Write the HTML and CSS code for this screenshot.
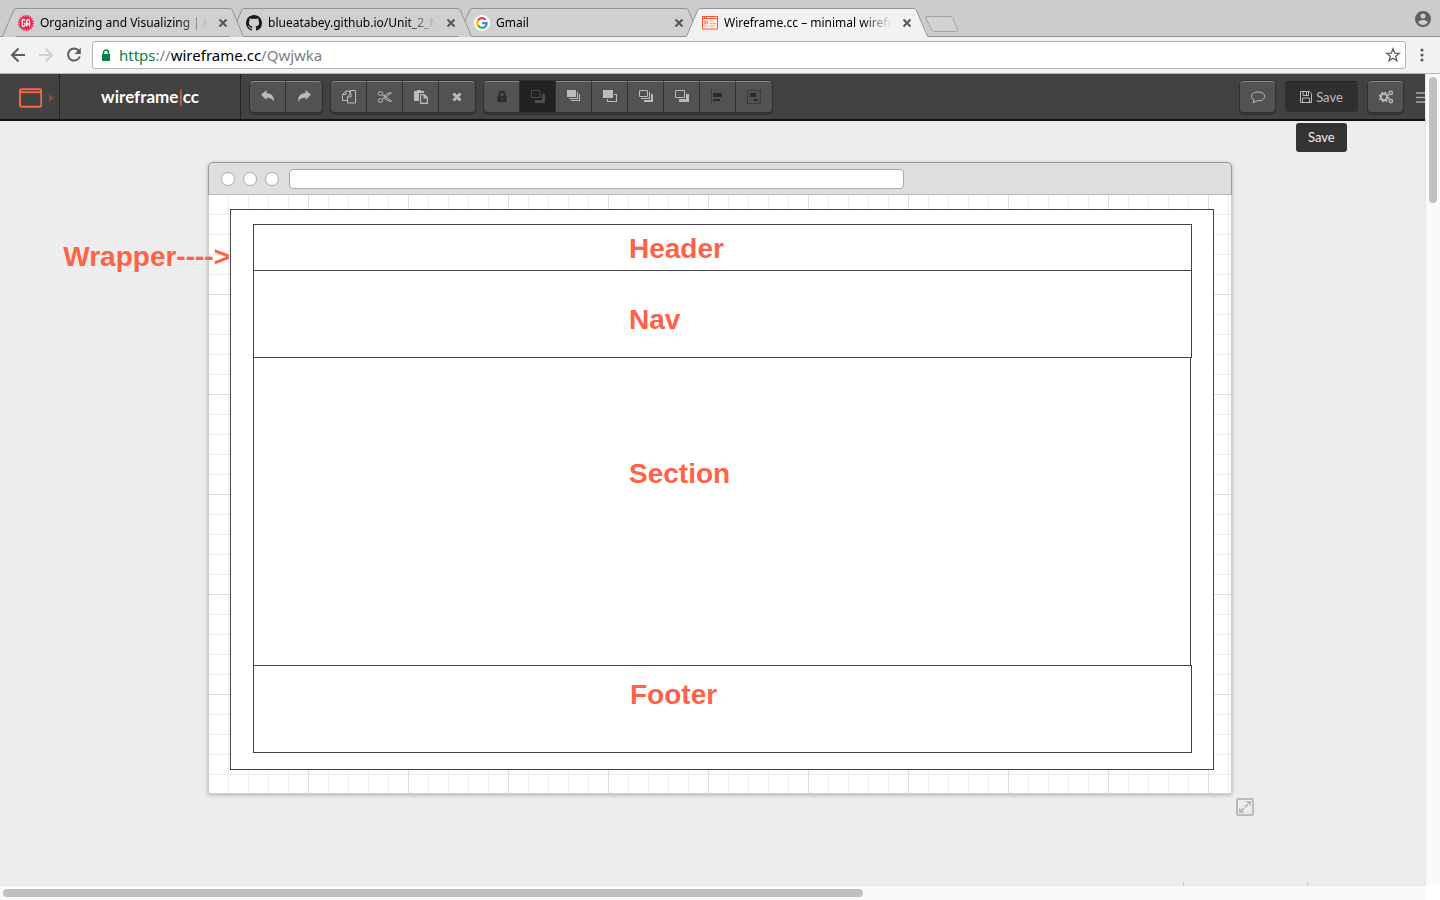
FILE: index.html
```html
<!DOCTYPE html>
<html lang="en">
<head>
<meta charset="utf-8">
<title>Wireframe.cc – minimal wireframing tool</title>
<link rel="stylesheet" href="styles.css">
</head>
<body>
<div class="browser">
  <div class="tabstrip">
    <div class="tabs">
      <div class="tab tab-a">
        <svg class="slant" viewBox="0 0 14 29"><path class="tab-fill" d="M0 29 12.500.5H14V29z"/><path class="tab-line" d="M.5 28.500 12 1.500Q12.500.5 14 .5"/></svg>
        <div class="tab-body">
          <svg class="favicon" viewBox="0 0 16 16"><circle cx="8" cy="8" r="6.800" fill="#f0204a"/><circle cx="8" cy="8" r="7.200" fill="none" stroke="#f0204a" stroke-width="1.600" stroke-dasharray="1.400 1.100"/><path d="M7 5.600Q6.800 4.500 5.600 4.500 4.200 4.500 4.200 6V10Q4.200 11.500 5.600 11.500 7 11.500 7 10V8.300H5.800M8.800 11.500V6Q8.800 4.500 10.200 4.500 11.600 4.500 11.600 6V11.500M8.800 9H11.600" fill="none" stroke="#fff" stroke-width="1.300"/></svg>
          <span class="tab-title">Organizing and Visualizing | H</span>
          <button class="tab-close" aria-label="Close tab"><svg viewBox="0 0 10 10"><path d="M1.500 1.500 8.500 8.500M8.500 1.500 1.500 8.500"/></svg></button>
        </div>
        <svg class="slant" viewBox="0 0 14 29"><path class="tab-fill" d="M14 29 1.500.5H0V29z"/><path class="tab-line" d="M13.500 28.500 2 1.500Q1.500.5 0 .5"/></svg>
      </div>
      <div class="tab tab-b">
        <svg class="slant" viewBox="0 0 14 29"><path class="tab-fill" d="M0 29 12.500.5H14V29z"/><path class="tab-line" d="M.5 28.500 12 1.500Q12.500.5 14 .5"/></svg>
        <div class="tab-body">
          <svg class="favicon" viewBox="0 0 16 16"><path fill="#1b1b1b" fill-rule="evenodd" d="M8 0C3.580 0 0 3.580 0 8c0 3.540 2.290 6.530 5.470 7.590.4.070.55-.17.55-.38 0-.19-.01-.82-.01-1.490-2.010.37-2.530-.49-2.690-.94-.09-.23-.48-.94-.82-1.130-.28-.15-.68-.52-.01-.53.63-.01 1.080.58 1.230.82.72 1.210 1.870.87 2.330.66.07-.52.28-.87.51-1.070-1.780-.2-3.640-.89-3.640-3.950 0-.87.31-1.590.82-2.150-.08-.2-.36-1.020.08-2.120 0 0 .67-.21 2.200.82.64-.18 1.320-.27 2-.27s1.360.09 2 .27c1.530-1.040 2.200-.82 2.200-.82.44 1.100.16 1.920.08 2.120.51.56.82 1.270.82 2.150 0 3.070-1.870 3.750-3.650 3.950.29.25.54.73.54 1.480 0 1.070-.01 1.930-.01 2.200 0 .21.15.46.55.38A8 8 0 0 0 16 8c0-4.420-3.580-8-8-8z"/></svg>
          <span class="tab-title">blueatabey.github.io/Unit_2_M</span>
          <button class="tab-close" aria-label="Close tab"><svg viewBox="0 0 10 10"><path d="M1.500 1.500 8.500 8.500M8.500 1.500 1.500 8.500"/></svg></button>
        </div>
        <svg class="slant" viewBox="0 0 14 29"><path class="tab-fill" d="M14 29 1.500.5H0V29z"/><path class="tab-line" d="M13.500 28.500 2 1.500Q1.500.5 0 .5"/></svg>
      </div>
      <div class="tab tab-c">
        <svg class="slant" viewBox="0 0 14 29"><path class="tab-fill" d="M0 29 12.500.5H14V29z"/><path class="tab-line" d="M.5 28.500 12 1.500Q12.500.5 14 .5"/></svg>
        <div class="tab-body">
          <svg class="favicon" viewBox="0 0 16 16"><circle cx="8" cy="8" r="8" fill="#fff"/><g fill="none" stroke-width="2.200"><path stroke="#ea4335" d="M4 5.500A4.800 4.800 0 0 1 11.600 4.700"/><path stroke="#fbbc05" d="M4 5.400A4.800 4.800 0 0 0 4 10.600"/><path stroke="#34a853" d="M4 10.500A4.800 4.800 0 0 0 11.200 11.600"/><path stroke="#4285f4" d="M8 8.200H12.700Q12.600 10.500 11.100 11.700"/></g></svg>
          <span class="tab-title">Gmail</span>
          <button class="tab-close" aria-label="Close tab"><svg viewBox="0 0 10 10"><path d="M1.500 1.500 8.500 8.500M8.500 1.500 1.500 8.500"/></svg></button>
        </div>
        <svg class="slant" viewBox="0 0 14 29"><path class="tab-fill" d="M14 29 1.500.5H0V29z"/><path class="tab-line" d="M13.500 28.500 2 1.500Q1.500.5 0 .5"/></svg>
      </div>
      <div class="tab tab-active">
        <svg class="slant" viewBox="0 0 14 29"><path class="tab-fill" d="M0 29 12.500.5H14V29z"/><path class="tab-line" d="M.5 28.500 12 1.500Q12.500.5 14 .5"/></svg>
        <div class="tab-body">
          <svg class="favicon" viewBox="0 0 16 16"><path d="M.5 1.500H15.500V14H.5z" fill="#fff0ea" stroke="#fb5530"/><path d="M0 1H16V4H0z" fill="#fb5530"/><path d="M1 2H2V3H1zM3 2H4V3H3zM5 2H15V3H5z" fill="#fff"/><path d="M2 5.500H6V9H2zM7.500 5.500H11V6.500H7.500zM7.500 8H14V9H7.500zM2 10.500H6V11.500H2zM7.500 10.500H13V11.500H7.500z" fill="#fda588"/></svg>
          <span class="tab-title">Wireframe.cc – minimal wirefr</span>
          <button class="tab-close" aria-label="Close tab"><svg viewBox="0 0 10 10"><path d="M1.500 1.500 8.500 8.500M8.500 1.500 1.500 8.500"/></svg></button>
        </div>
        <svg class="slant" viewBox="0 0 14 29"><path class="tab-fill" d="M14 29 1.500.5H0V29z"/><path class="tab-line" d="M13.500 28.500 2 1.500Q1.500.5 0 .5"/></svg>
      </div>
      <button class="new-tab" aria-label="New tab"><svg viewBox="0 0 34 17"><path d="M2 .5H25Q27 .5 28 2.500L32.500 13.500Q33.200 15.500 31.500 15.500H9.500Q7.500 15.500 6.500 13.500L1 2.500Q.2.5 2 .5z" fill="#d2d2d2" stroke="#a2a2a2"/></svg></button>
    </div>
    <button class="profile" aria-label="Profile"><svg viewBox="0 0 16 16"><path fill="#5f5f5f" fill-rule="evenodd" d="M8 0a8 8 0 1 0 0 16A8 8 0 0 0 8 0zm0 2.600a2.500 2.500 0 1 1 0 5 2.500 2.500 0 0 1 0-5zm0 11.400a5.500 5.500 0 0 1-4.700-2.500c0-1.600 3.100-2.400 4.700-2.400s4.700.8 4.700 2.400A5.500 5.500 0 0 1 8 14z"/></svg></button>
  </div>
  <div class="addressbar">
    <div class="nav-btns">
      <button aria-label="Back"><svg viewBox="0 0 16 16"><path d="M15 8H2M8.500 1.500 2 8 8.500 14.500" fill="none" stroke="#5c5c5c" stroke-width="2"/></svg></button>
      <button aria-label="Forward"><svg viewBox="0 0 16 16"><path d="M1 8H14M7.500 1.500 14 8 7.500 14.500" fill="none" stroke="#d0d0d0" stroke-width="2"/></svg></button>
      <button aria-label="Reload"><svg viewBox="0 0 16 16"><path d="M12.800 3.800A6 6 0 1 0 13.800 9.500" fill="none" stroke="#5c5c5c" stroke-width="2"/><path d="M14.800.8V7H8.600z" fill="#5c5c5c"/></svg></button>
    </div>
    <div class="omnibox">
      <svg class="lock" viewBox="0 0 10 13"><path d="M2.500 6V3.500a2.500 2.500 0 0 1 5 0V6" fill="none" stroke="#0b8043" stroke-width="1.500"/><path d="M1 5H9V12H1z" fill="#0b8043"/></svg>
      <a class="url" href="#"><span class="secure">https</span><span class="dim">://</span>wireframe.cc<span class="dim">/Qwjwka</span></a>
      <button class="star" aria-label="Bookmark"><svg viewBox="0 0 16 16"><path d="M8 1.800 9.700 6.200 14.300 6.400 10.700 9.300 11.900 13.800 8 11.300 4.100 13.800 5.300 9.300 1.700 6.400 6.300 6.200z" fill="none" stroke="#5c5c5c" stroke-width="1.300"/></svg></button>
    </div>
    <button class="kebab" aria-label="Menu"><svg viewBox="0 0 4 16"><g fill="#5c5c5c"><circle cx="2" cy="3" r="1.600"/><circle cx="2" cy="8" r="1.600"/><circle cx="2" cy="13" r="1.600"/></g></svg></button>
  </div>

  <div class="viewport">
    <div class="page">
      <header class="toolbar">
        <button class="stencil" aria-label="Stencils">
          <svg class="stencil-icon" viewBox="0 0 24 20"><rect x="1" y="1" width="22" height="18" rx="1.500" fill="none" stroke="#ff6347" stroke-width="2"/><path d="M1 4H23" stroke="#ff6347" stroke-width="2"/><path d="M3 2.500H4M6 2.500H7M8 2.500H22" stroke="#6b4540"/></svg>
          <svg class="stencil-arrow" viewBox="0 0 6 8"><path d="M0 0 6 4 0 8z" fill="#8d4539"/></svg>
        </button>
        <a class="brand" href="#">wireframe<span class="bar">|</span>cc</a>
        <div class="tools">
          <div class="group">
            <button class="tool" aria-label="Undo"><svg viewBox="0 0 16 16"><path d="M1 5.800 6.500 1V4Q14.500 4.300 14 13 12.500 8.800 6.500 8.500V11z"/></svg></button>
            <button class="tool" aria-label="Redo"><svg viewBox="0 0 16 16"><path d="M15 5.800 9.500 1V4Q1.500 4.300 2 13 3.500 8.800 9.500 8.500V11z"/></svg></button>
          </div>
          <div class="group">
            <button class="tool" aria-label="Copy"><svg viewBox="0 0 16 16"><path class="line" d="M6.500 11.500H1.500V5.500L5 2H8.500V4.500M1.500 5.500H5V2M6.500 14V8L9.500 4.500V1.500H14.500V14zM6.500 8H10V4.500"/></svg></button>
            <button class="tool" aria-label="Cut"><svg viewBox="0 0 16 16"><g class="line"><ellipse cx="3.500" cy="4.500" rx="2.300" ry="1.800"/><ellipse cx="3.500" cy="11.500" rx="2.300" ry="1.800"/><path d="M5.500 5.800 14.500 12 12.500 12.500 6.500 9M5.500 10.200 14.500 4 12.500 3.500 6.500 7.200"/></g></svg></button>
            <button class="tool" aria-label="Paste"><svg viewBox="0 0 16 16"><path fill-rule="evenodd" d="M1 2H4V1H8V2H11V4H6V12H1zM7 5H11.500L15 8.500V15H7zM8.200 6.200V13.800H13.800V9.500H10.500V6.200z"/></svg></button>
            <button class="tool" aria-label="Delete"><svg viewBox="0 0 16 16"><path d="M4.500 4.500 11.500 11.500M11.500 4.500 4.500 11.500" stroke="#bbb" stroke-width="3"/></svg></button>
          </div>
          <div class="group">
            <button class="tool off" aria-label="Lock"><svg viewBox="0 0 16 16"><path d="M5.500 8V5a2.500 2.500 0 0 1 5 0V8" fill="none" stroke="#2b2b2b" stroke-width="2"/><path d="M3.500 7H12.500V13H3.500z"/><path d="M7.500 8.500H8.500V11.500H7.500z" fill="#555"/></svg></button>
            <button class="tool pressed" aria-label="Layers"><svg viewBox="0 0 16 16"><path d="M1.500 1.500H10V8.500H1.500z" fill="none" stroke="#4c4c4c"/><path d="M12 5H15V14H5V11H12z" fill="#4c4c4c"/></svg></button>
            <button class="tool" aria-label="Bring to front"><svg viewBox="0 0 16 16"><path d="M1 1H10V8H1zM11 3H12V10H3V9H11zM13 5H14V12H5V11H13z"/></svg></button>
            <button class="tool" aria-label="Bring forward"><svg viewBox="0 0 16 16"><path d="M1 1H11V9H1zM12 5H15V13H5V10H6V12H14V6H12z"/></svg></button>
            <button class="tool" aria-label="Send to back"><svg viewBox="0 0 16 16"><path class="line" d="M1.500 1.500H9.500V7.500H1.500z"/><path d="M11 3H12V10H3V9H11zM13 5H15V13H6V11H13z"/></svg></button>
            <button class="tool" aria-label="Send backward"><svg viewBox="0 0 16 16"><path class="line" d="M1.500 1.500H10.500V8.500H1.500z"/><path d="M12 5H15V13H5V10H12z"/></svg></button>
            <button class="tool off" aria-label="Align"><svg viewBox="0 0 16 16"><path d="M1.500 1V15" stroke="#2b2b2b" stroke-dasharray="1 1"/><path d="M3 4H12V8H3zM3 10H10V12H3z"/></svg></button>
            <button class="tool off" aria-label="Group"><svg viewBox="0 0 16 16"><path d="M1 1.500H15M1 14.500H15M1.500 1V15M14.500 1V15" stroke="#2b2b2b" stroke-dasharray="1 1"/><path d="M4 4H10V8H4zM8 10H12V12H8z"/></svg></button>
          </div>
        </div>
        <div class="actions">
          <button class="tool solo" aria-label="Comments"><svg viewBox="0 0 16 16"><path class="line" d="M8 3C4.500 3 1.500 4.800 1.500 7.500 1.500 9 2.500 10.200 4.200 11L3 13.500Q5.500 13 6.800 11.800 14.500 12.200 14.500 7.500 14.500 3 8 3z"/></svg></button>
          <div class="save-wrap">
            <button class="save"><svg viewBox="0 0 12 12"><path d="M.5.5H9.500L11.500 2.500V11.500H.5zM3 .5V4.500H8.500V.5M2.500 11.500V7H9.500V11.500M6.500 1V4" fill="none" stroke="#bbb"/></svg>Save</button>
            <span class="tooltip" role="tooltip">Save</span>
          </div>
          <button class="tool solo" aria-label="Settings"><svg viewBox="0 0 16 16"><g fill="none" stroke="#bbb"><circle cx="6" cy="8" r="3.200" stroke-width="2"/><circle cx="6" cy="8" r="4.700" stroke-dasharray="2 1.700" stroke-width="1.300"/><circle cx="12.800" cy="3.800" r="1.700" stroke-width="1.400"/><circle cx="12.800" cy="12" r="1.700" stroke-width="1.400"/></g></svg></button>
          <button class="menu" aria-label="Menu"><svg viewBox="0 0 12 11"><path d="M0 1H12M0 5.500H12M0 10H12" stroke="#aaa" stroke-width="1.500"/></svg></button>
        </div>
      </header>

      <main class="workspace">
        <section class="frame">
          <div class="frame-bar">
            <i class="dot"></i><i class="dot"></i><i class="dot"></i>
            <div class="frame-url"></div>
          </div>
          <div class="canvas">
            <div class="wrapper-box">
              <div class="block block-header"><h2 class="label">Header</h2></div>
              <div class="block block-nav"><h2 class="label">Nav</h2></div>
              <div class="block block-section"><h2 class="label">Section</h2></div>
              <div class="block block-footer"><h2 class="label">Footer</h2></div>
            </div>
          </div>
          <p class="label callout">Wrapper----&gt;</p>
          <button class="resize" aria-label="Resize canvas"><svg viewBox="0 0 18 18"><rect x="1" y="1" width="16" height="16" rx="1" fill="none" stroke="#bbb" stroke-width="2"/><path d="M5 13 13 5" stroke="#bbb" stroke-width="2" stroke-dasharray="4 1.500"/><path d="M9.500 3H15V8.500zM3 9.500V15H8.500z" fill="#bbb"/></svg></button>
        </section>
        <div class="ticks"><i></i><i></i></div>
      </main>
    </div>
    <div class="vscroll"><div class="vthumb"></div></div>
    <div class="hscroll"><div class="hthumb"></div></div>
    <div class="corner"></div>
  </div>
</div>
</body>
</html>
```
FILE: styles.css
```css
* { box-sizing: border-box; }
body { margin: 0; background: #ededed; }
button { margin: 0; padding: 0; border: 0; background: none; color: inherit; font: inherit; }
svg { display: block; }
a { color: inherit; text-decoration: none; }

.browser { display: flex; flex-direction: column; height: 100vh; overflow: hidden; }

/* Tab strip */
.tabstrip {
  display: flex;
  justify-content: space-between;
  height: 37px;
  padding: 8px 9px 0 2px;
  background: #ccc;
  box-shadow: inset 0 -1px #949494;
  font: 12px/16px "Noto Sans", "Open Sans", sans-serif;
}
.tabs { display: flex; }
.tab { display: flex; width: 242px; margin-right: -14px; position: relative; }
.tab-a { z-index: 3; }
.tab-b { z-index: 2; }
.tab-c { z-index: 1; }
.tab-active { z-index: 4; margin-right: 0; }
.slant { width: 14px; height: 29px; flex: none; }
.tab-fill { fill: #d0d0d0; }
.tab-line { fill: none; stroke: #949494; }
.tab-body {
  display: flex;
  flex: 1;
  min-width: 0;
  align-items: center;
  padding: 0 2px;
  border-top: 1px solid #949494;
  border-bottom: 1px solid #949494;
  background: #d0d0d0;
}
.tab-active .tab-fill { fill: #f2f2f2; }
.tab-active .tab-body { background: #f2f2f2; border-bottom-color: #f2f2f2; }
.favicon { width: 16px; height: 16px; flex: none; }
.tab-title {
  flex: 1;
  min-width: 0;
  margin-left: 6px;
  white-space: nowrap;
  color: #000;
  -webkit-mask-image: linear-gradient(90deg, #000 calc(100% - 30px), transparent);
  mask-image: linear-gradient(90deg, #000 calc(100% - 30px), transparent);
}
.tab-close { margin-left: 10px; }
.tab-close svg { width: 10px; height: 10px; fill: none; stroke: #555; stroke-width: 2; }
.new-tab { align-self: flex-start; margin: 8px 0 0 -3px; }
.new-tab svg { width: 34px; height: 17px; }
.profile { align-self: flex-start; margin-top: 3px; }
.profile svg { width: 16px; height: 16px; }

/* Address bar */
.addressbar {
  display: flex;
  align-items: center;
  gap: 10px;
  height: 37px;
  padding: 0 16px 0 10px;
  background: #f2f2f2;
  border-bottom: 1px solid #b4b4b4;
}
.nav-btns { display: flex; gap: 12px; }
.nav-btns svg { width: 16px; height: 16px; }
.omnibox {
  display: flex;
  flex: 1;
  align-items: center;
  height: 28px;
  margin-right: 4px;
  padding: 0 4px 0 8px;
  border: 1px solid #b4b4b4;
  border-radius: 3px;
  background: #fff;
}
.lock { width: 10px; height: 13px; }
.url { flex: 1; margin-left: 8px; font: 15px/20px "Noto Sans", "Open Sans", sans-serif; color: #000; }
.secure { color: #0b8043; }
.dim { color: #808080; }
.star svg { width: 16px; height: 16px; }
.kebab svg { width: 4px; height: 16px; }

/* Page area with its scrollbars */
.viewport {
  display: grid;
  flex: 1;
  min-height: 0;
  grid-template-columns: minmax(0, 1fr) 15px;
  grid-template-rows: minmax(0, 1fr) 15px;
}
.page { display: flex; flex-direction: column; min-width: 0; overflow: hidden; }
.vscroll { padding: 3px; background: #fafafa; border-left: 1px solid #e4e4e4; }
.vthumb { width: 8px; height: 126px; border-radius: 4px; background: #c1c1c1; }
.hscroll { padding: 3px; background: #fafafa; border-top: 1px solid #e4e4e4; }
.hthumb { width: 860px; max-width: 100%; height: 8px; border-radius: 4px; background: #c1c1c1; }
.corner { background: #fff; }

/* Application toolbar */
.toolbar {
  display: flex;
  flex: none;
  height: 47px;
  background: #424242;
  border-bottom: 2px solid #111;
  font: 13px/20px Lato, sans-serif;
  color: #bbb;
}
.stencil { display: flex; align-items: center; width: 60px; padding: 2px 4px 0 19px; gap: 7px; border-right: 1px solid #222; }
.stencil-icon { width: 24px; height: 20px; }
.stencil-arrow { width: 6px; height: 8px; }
.brand {
  display: flex;
  align-items: center;
  justify-content: center;
  width: 181px;
  border-right: 1px solid #222;
  font-size: 17px;
  font-weight: 700;
  color: #fff;
}
.bar { color: #ff6347; font-weight: 400; }
.tools { display: flex; gap: 9px; padding: 7px 0 0 9px; }
.group {
  display: flex;
  height: 31px;
  border-radius: 4px;
  background: #525252;
  box-shadow: 0 0 0 1px #303030, 0 2px 1px 1px #333;
}
.tool {
  display: flex;
  align-items: center;
  justify-content: center;
  width: 36px;
  height: 31px;
  border-right: 1px solid #303030;
  border-top: 1px solid #888;
}
.group .tool:first-child { border-radius: 4px 0 0 4px; }
.group .tool:last-child { border-right-color: #525252; border-radius: 0 4px 4px 0; }
.tool svg { width: 16px; height: 16px; fill: #bbb; }
.tool.off svg { fill: #2b2b2b; }
.tool .line { fill: none; stroke: #bbb; }
.tool.pressed { background: #222; border-top-color: #222; }
.actions { display: flex; flex: none; margin-left: auto; padding-top: 7px; gap: 10px; }
.tool.solo {
  width: 35px;
  border-right: 0;
  border-radius: 4px;
  background: #525252;
  box-shadow: 0 0 0 1px #303030, 0 2px 1px 1px #333;
}
.save-wrap { position: relative; }
.save {
  display: flex;
  align-items: center;
  justify-content: center;
  gap: 4px;
  width: 73px;
  height: 31px;
  border-radius: 4px;
  background: #303030;
  border-top: 1px solid #222;
}
.save svg { width: 12px; height: 12px; }
.tooltip {
  position: absolute;
  top: 42px;
  left: 11px;
  z-index: 5;
  padding: 4px 12px 5px;
  border-radius: 3px;
  background: #333;
  color: #eee;
}
.menu { width: 12px; height: 32px; margin: 0 -3px 0 3px; }
.menu svg { width: 12px; height: 11px; }

/* Drawing area */
.workspace {
  display: flex;
  flex: 1;
  flex-direction: column;
  align-items: center;
  padding: 41px 0 0 15px;
  background: #ededed;
}
.frame { position: relative; width: 100%; max-width: 1024px; border-radius: 5px 5px 0 0; box-shadow: 0 1px 4px rgba(0, 0, 0, .25); }
.frame-bar {
  display: flex;
  align-items: center;
  gap: 8px;
  height: 33px;
  padding: 0 12px;
  border: 1px solid #999;
  border-bottom-color: #bbb;
  border-radius: 5px 5px 0 0;
  background: #dedede;
}
.dot { width: 14px; height: 14px; border: 1px solid #aaa; border-radius: 50%; background: #fff; }
.frame-url { width: 615px; height: 20px; margin-left: 2px; border: 1px solid #aaa; border-radius: 4px; background: #fff; }
.canvas {
  padding: 14px 17px 23px 21px;
  border: 1px solid #ccc;
  border-top: 0;
  background-color: #fff;
  background-image:
    repeating-linear-gradient(90deg, transparent 0 99px, #dcdcdc 99px 100px),
    repeating-linear-gradient(180deg, transparent 0 99px, #dcdcdc 99px 100px),
    repeating-linear-gradient(90deg, transparent 0 19px, #ececec 19px 20px),
    repeating-linear-gradient(180deg, transparent 0 19px, #ececec 19px 20px);
}
.wrapper-box { padding: 14px 21px 16px 22px; border: 1px solid #444; background: #fff; }
.block { padding-left: 375px; border: 1px solid #444; background: #fff; }
.block + .block { margin-top: -1px; }
.block-header { height: 47px; padding-top: 8px; }
.block-nav { height: 88px; padding-top: 33px; }
.block-section { height: 309px; margin-right: 1px; padding-top: 100px; }
.block-footer { height: 88px; padding-top: 13px; padding-left: 376px; }
.label { margin: 0; font: 700 28px/32px "Liberation Sans", Arial, sans-serif; color: #ff6347; }
.callout { position: absolute; top: 79px; right: 1002px; white-space: nowrap; }
.resize { position: absolute; right: -22px; bottom: -22px; }
.resize svg { width: 18px; height: 18px; }
.ticks { display: flex; align-self: flex-end; gap: 123px; margin-top: auto; padding-right: 117px; }
.ticks i { width: 1px; height: 3px; background: #c4c4c4; }
```
